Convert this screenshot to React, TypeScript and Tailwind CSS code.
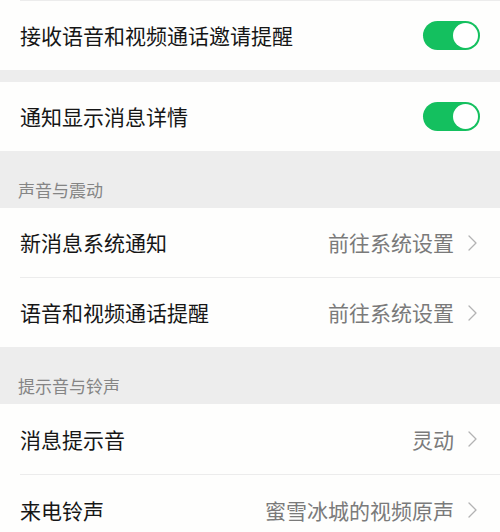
import React from 'react';

const font = { fontFamily: '"Noto Sans CJK SC", "Noto Sans", sans-serif' };

const Toggle = () => (
  <div className="flex h-[29px] w-[57px] items-center justify-end rounded-full bg-[#14c05f] pr-[2px]">
    <div className="h-[25px] w-[25px] rounded-full bg-white" />
  </div>
);

const Chevron = () => (
  <svg width="9" height="16" viewBox="0 0 9 16" fill="none">
    <path d="M1 1l7 7-7 7" stroke="#b3b3b3" strokeWidth="1.3" strokeLinecap="round" strokeLinejoin="round" />
  </svg>
);

interface RowProps {
  label: string;
  value?: string;
  toggle?: boolean;
  divider?: boolean;
  height?: string;
}

const Row: React.FC<RowProps> = ({ label, value, toggle, divider, height = 'h-[70px]' }) => (
  <div className="bg-[#fefefd]">
    {divider && <div className="ml-[20px] h-px bg-[#ececec]" />}
    <div className={`flex ${height} items-center justify-between pl-[20px] pr-[20px]`}>
      <span className="text-[21px] leading-none text-[#161616]">{label}</span>
      {toggle ? (
        <Toggle />
      ) : (
        <div className="flex items-center gap-[14px] pr-[3px]">
          <span className="text-[21px] leading-none text-[#7a7a7a]">{value}</span>
          <Chevron />
        </div>
      )}
    </div>
  </div>
);

const SectionHeader: React.FC<{ title: string }> = ({ title }) => (
  <div className="flex h-[57px] items-end bg-[#ededed] pb-[10px] pl-[18px]">
    <span className="text-[17px] leading-none text-[#858585]">{title}</span>
  </div>
);

export default function App() {
  return (
    <div className="h-[532px] w-[500px] overflow-hidden bg-[#ededed]" style={font}>
      <div className="bg-[#fefefd]">
        <div className="ml-[20px] h-px bg-[#ececec]" />
        <div className="flex h-[69px] items-center justify-between pl-[20px] pr-[20px]">
          <span className="text-[21px] leading-none text-[#161616]">接收语音和视频通话邀请提醒</span>
          <Toggle />
        </div>
      </div>
      <div className="h-[12px]" />
      <Row label="通知显示消息详情" toggle height="h-[69px]" />
      <SectionHeader title="声音与震动" />
      <Row label="新消息系统通知" value="前往系统设置" height="h-[69px]" />
      <Row label="语音和视频通话提醒" value="前往系统设置" divider height="h-[69px]" />
      <SectionHeader title="提示音与铃声" />
      <Row label="消息提示音" value="灵动" height="h-[70px]" />
      <Row label="来电铃声" value="蜜雪冰城的视频原声" divider height="h-[70px]" />
    </div>
  );
}
